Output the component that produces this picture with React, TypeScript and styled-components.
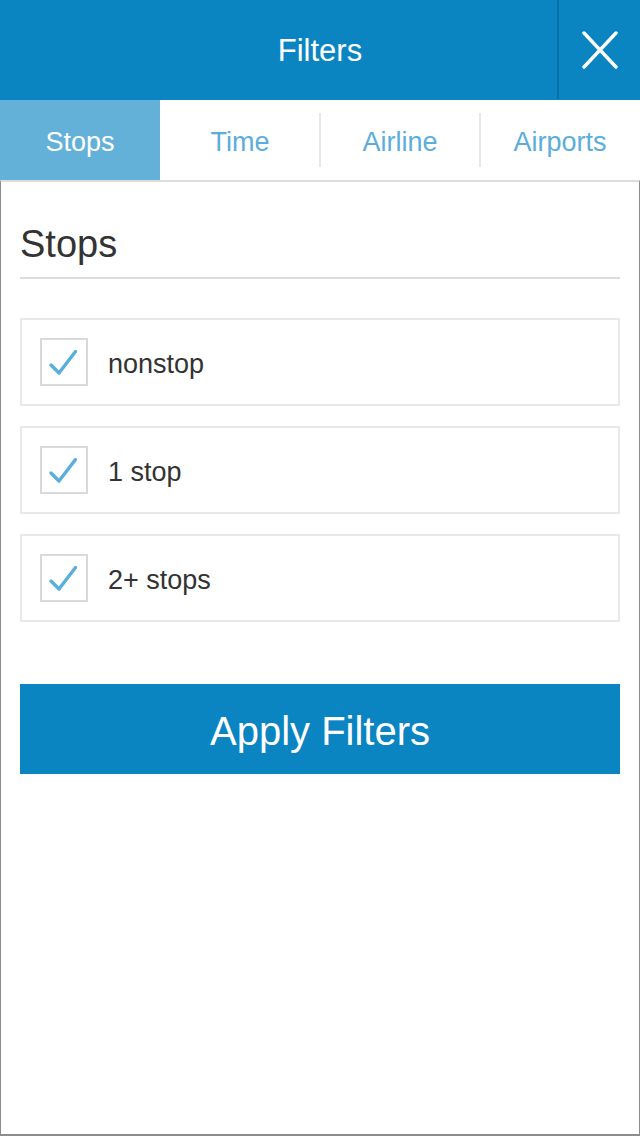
import { useState } from "react";
import styled, { createGlobalStyle } from "styled-components";

const GlobalStyle = createGlobalStyle`
  html, body {
    margin: 0;
    padding: 0;
    background: #fff;
  }
  body {
    font-family: "Liberation Sans", Arial, sans-serif;
    -webkit-font-smoothing: antialiased;
  }
  * {
    box-sizing: border-box;
  }
`;

const Screen = styled.div`
  width: 640px;
  height: 1136px;
  display: flex;
  flex-direction: column;
`;

const Header = styled.header`
  position: relative;
  height: 100px;
  flex-shrink: 0;
  background: #0b85c2;
  display: flex;
  align-items: center;
  justify-content: center;
`;

const Title = styled.h1`
  margin: 0;
  padding-top: 2px;
  font-size: 31px;
  font-weight: 400;
  color: #fff;
`;

// sits over the right end of the header bar
const CloseButton = styled.button`
  position: absolute;
  top: 0;
  right: 0;
  width: 83px;
  height: 99px;
  padding: 0;
  border: none;
  border-left: 2px solid #096ea4;
  background: transparent;
  display: flex;
  align-items: center;
  justify-content: center;
  cursor: pointer;
`;

const Tabs = styled.nav`
  height: 80px;
  flex-shrink: 0;
  display: grid;
  grid-template-columns: repeat(4, 1fr);
  background: #fff;
`;

const Tab = styled.button<{ $active?: boolean; $divider?: boolean }>`
  position: relative;
  border: none;
  padding: 5px 0 0;
  font-family: inherit;
  font-size: 27px;
  background: ${(p) => (p.$active ? "#63b0d9" : "#fff")};
  color: ${(p) => (p.$active ? "#fff" : "#5badda")};
  cursor: pointer;

  &::before {
    content: "";
    display: ${(p) => (p.$divider ? "block" : "none")};
    position: absolute;
    left: -1px;
    top: 13px;
    bottom: 13px;
    width: 2px;
    background: #e8e8e8;
  }
`;

const Panel = styled.main`
  flex: 1;
  border-top: 2px solid #dcdcdc;
  border-left: 1px solid #8c8c8c;
  border-right: 1px solid #8c8c8c;
  border-bottom: 2px solid #8c8c8c;
  padding: 0 19px;
  display: flex;
  flex-direction: column;
`;

const SectionTitle = styled.h2`
  margin: 0;
  padding-top: 43px;
  height: 97px;
  font-size: 38px;
  font-weight: 400;
  line-height: 1;
  color: #333;
  border-bottom: 2px solid #dcdcdc;
`;

const OptionList = styled.ul`
  list-style: none;
  margin: 39px 0 0;
  padding: 0;
  display: flex;
  flex-direction: column;
  gap: 20px;
`;

const Option = styled.li`
  height: 88px;
  border: 2px solid #e8e8e8;
  display: flex;
  align-items: center;
  padding-left: 18px;
  gap: 20px;
  cursor: pointer;
`;

const Box = styled.span`
  width: 48px;
  height: 48px;
  border: 2px solid #d9d9d9;
  display: flex;
  flex-shrink: 0;
`;

const OptionLabel = styled.span`
  padding-top: 4px;
  font-size: 27px;
  color: #333;
`;

const ApplyButton = styled.button`
  margin-top: 62px;
  height: 90px;
  border: none;
  padding: 5px 0 0;
  background: #0b85c2;
  color: #fff;
  font-family: inherit;
  font-size: 40px;
  cursor: pointer;
`;

const CloseIcon = () => (
  <svg width="36" height="38" viewBox="0 0 36 38">
    <path d="M2 2 L34 36 M34 2 L2 36" stroke="#fff" strokeWidth="3.4" strokeLinecap="round" fill="none" />
  </svg>
);

const Check = () => (
  <svg width="44" height="44" viewBox="0 0 44 44">
    <polyline
      points="9,25 17,33 33.5,11.5"
      stroke="#5aaedb"
      strokeWidth="3.4"
      strokeLinecap="round"
      strokeLinejoin="round"
      fill="none"
    />
  </svg>
);

const tabs = ["Stops", "Time", "Airline", "Airports"];
const options = ["nonstop", "1 stop", "2+ stops"];

export default function App() {
  const [active, setActive] = useState(0);
  const [checked, setChecked] = useState([true, true, true]);

  const toggle = (i: number) =>
    setChecked((c) => c.map((v, j) => (j === i ? !v : v)));

  return (
    <>
      <GlobalStyle />
      <Screen>
        <Header>
          <Title>Filters</Title>
          <CloseButton aria-label="Close">
            <CloseIcon />
          </CloseButton>
        </Header>
        <Tabs>
          {tabs.map((t, i) => (
            <Tab
              key={t}
              $active={i === active}
              $divider={i > 1 && i !== active && i - 1 !== active}
              onClick={() => setActive(i)}
            >
              {t}
            </Tab>
          ))}
        </Tabs>
        <Panel>
          <SectionTitle>Stops</SectionTitle>
          <OptionList>
            {options.map((o, i) => (
              <Option key={o} onClick={() => toggle(i)}>
                <Box>{checked[i] && <Check />}</Box>
                <OptionLabel>{o}</OptionLabel>
              </Option>
            ))}
          </OptionList>
          <ApplyButton>Apply Filters</ApplyButton>
        </Panel>
      </Screen>
    </>
  );
}
